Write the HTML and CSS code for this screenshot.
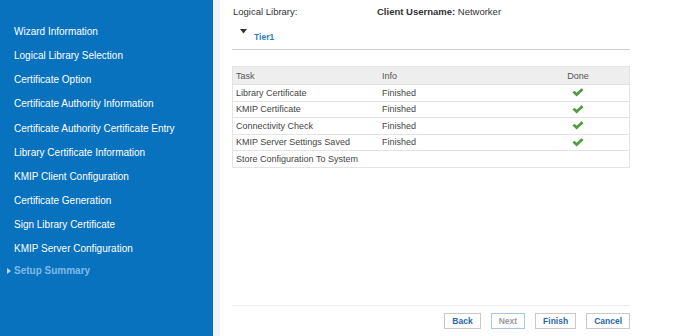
FILE: index.html
```html
<!DOCTYPE html>
<html>
<head>
<meta charset="utf-8">
<link rel="stylesheet" href="styles.css">
</head>
<body>
<div class="app">
  <nav class="sidebar">
    <div class="nav-item">Wizard Information</div>
    <div class="nav-item">Logical Library Selection</div>
    <div class="nav-item">Certificate Option</div>
    <div class="nav-item">Certificate Authority Information</div>
    <div class="nav-item">Certificate Authority Certificate Entry</div>
    <div class="nav-item">Library Certificate Information</div>
    <div class="nav-item">KMIP Client Configuration</div>
    <div class="nav-item">Certificate Generation</div>
    <div class="nav-item">Sign Library Certificate</div>
    <div class="nav-item">KMIP Server Configuration</div>
    <div class="nav-item active"><span class="arrow"></span>Setup Summary</div>
  </nav>
  <main class="main">
    <div class="content">
      <div class="info-row">
        <div class="info-col">Logical Library:</div>
        <div class="info-col"><b>Client Username:</b> Networker</div>
      </div>
      <div class="tier">
        <svg class="tri" width="7" height="5" viewBox="0 0 7 5"><path d="M0 0 L7 0 L3.5 4.5 Z" fill="#333"/></svg>
        <span class="tier-name">Tier1</span>
      </div>
      <table class="tasks">
        <thead>
          <tr><th class="c-task">Task</th><th class="c-info">Info</th><th class="c-done">Done</th></tr>
        </thead>
        <tbody>
          <tr><td>Library Certificate</td><td>Finished</td><td class="c-done"><svg class="check" width="12" height="9" viewBox="0 0 12 9"><path d="M0.5 4.6 L2.4 2.8 L4.6 4.8 L9.6 0.3 L11.5 2.1 L4.6 8.6 Z" fill="#4c9a3c"/></svg></td></tr>
          <tr><td>KMIP Certificate</td><td>Finished</td><td class="c-done"><svg class="check" width="12" height="9" viewBox="0 0 12 9"><path d="M0.5 4.6 L2.4 2.8 L4.6 4.8 L9.6 0.3 L11.5 2.1 L4.6 8.6 Z" fill="#4c9a3c"/></svg></td></tr>
          <tr><td>Connectivity Check</td><td>Finished</td><td class="c-done"><svg class="check" width="12" height="9" viewBox="0 0 12 9"><path d="M0.5 4.6 L2.4 2.8 L4.6 4.8 L9.6 0.3 L11.5 2.1 L4.6 8.6 Z" fill="#4c9a3c"/></svg></td></tr>
          <tr><td>KMIP Server Settings Saved</td><td>Finished</td><td class="c-done"><svg class="check" width="12" height="9" viewBox="0 0 12 9"><path d="M0.5 4.6 L2.4 2.8 L4.6 4.8 L9.6 0.3 L11.5 2.1 L4.6 8.6 Z" fill="#4c9a3c"/></svg></td></tr>
          <tr><td>Store Configuration To System</td><td></td><td class="c-done"></td></tr>
        </tbody>
      </table>
    </div>
    <div class="footer">
      <button class="btn">Back</button>
      <button class="btn disabled">Next</button>
      <button class="btn">Finish</button>
      <button class="btn">Cancel</button>
    </div>
  </main>
</div>
</body>
</html>
```

FILE: styles.css
```css
html, body {
  margin: 0;
  padding: 0;
  height: 100%;
  overflow: hidden;
  background: #fff;
  font-family: "Liberation Sans", Arial, sans-serif;
}
.app {
  display: flex;
  width: 675px;
  height: 336px;
}
.sidebar {
  width: 213px;
  flex: none;
  background: #0872be;
  padding-top: 20px;
  box-sizing: border-box;
}
.nav-item {
  position: relative;
  height: 24.15px;
  line-height: 24px;
  padding-left: 14px;
  font-size: 10px;
  color: #fff;
  white-space: nowrap;
}
.nav-item.active {
  height: 20px;
  line-height: 20px;
  font-weight: bold;
  color: #82b9e6;
}
.arrow {
  position: absolute;
  left: 7px;
  top: 7px;
  width: 0;
  height: 0;
  border-top: 3px solid transparent;
  border-bottom: 3px solid transparent;
  border-left: 4px solid #b7d7f2;
}
.main {
  flex: 1;
  display: flex;
  flex-direction: column;
  border-left: 7px solid #f3f3f3;
  padding: 0 45px 0 12px;
  min-width: 0;
}
.content {
  flex: 1;
}
.info-row {
  display: flex;
  height: 22px;
  align-items: center;
  font-size: 9.5px;
  color: #333;
}
.info-col:first-child {
  width: 144px;
  padding-left: 1px;
}
.tier {
  display: flex;
  align-items: flex-start;
  height: 28px;
  padding-left: 8px;
  border-bottom: 1px solid #cfcfcf;
  box-sizing: border-box;
}
.tri {
  margin-top: 7px;
}
.tier-name {
  margin-top: 10px;
  margin-left: 7px;
  font-size: 8.5px;
  font-weight: bold;
  color: #2a7fc4;
}
.tasks {
  margin-top: 16px;
  width: 100%;
  border-collapse: collapse;
  border: 1px solid #e3e3e3;
  font-size: 9px;
  color: #444;
}
.tasks th {
  background: #eeeeee;
  font-weight: normal;
  color: #555;
  text-align: left;
  height: 17px;
  padding: 0 3px;
}
.tasks td {
  height: 15.5px;
  padding: 0 3px;
  border-top: 1px solid #e3e3e3;
}
.c-task {
  width: 140px;
}
.tasks th.c-done, .tasks td.c-done {
  text-align: center;
  width: 96px;
}
.check {
  display: block;
  margin: 0 auto;
}
.footer {
  display: flex;
  justify-content: flex-end;
  gap: 10px;
  border-top: 1px solid #ededed;
  padding: 7px 0 7px;
}
.btn {
  height: 16px;
  padding: 0 7px;
  background: #fff;
  border: 1px solid #c9c9c9;
  font-family: "Liberation Sans", Arial, sans-serif;
  font-size: 8.5px;
  font-weight: bold;
  color: #2567ad;
  cursor: pointer;
}
.btn.disabled {
  color: #9a9a9a;
  border-color: #a9c6e4;
}
```
